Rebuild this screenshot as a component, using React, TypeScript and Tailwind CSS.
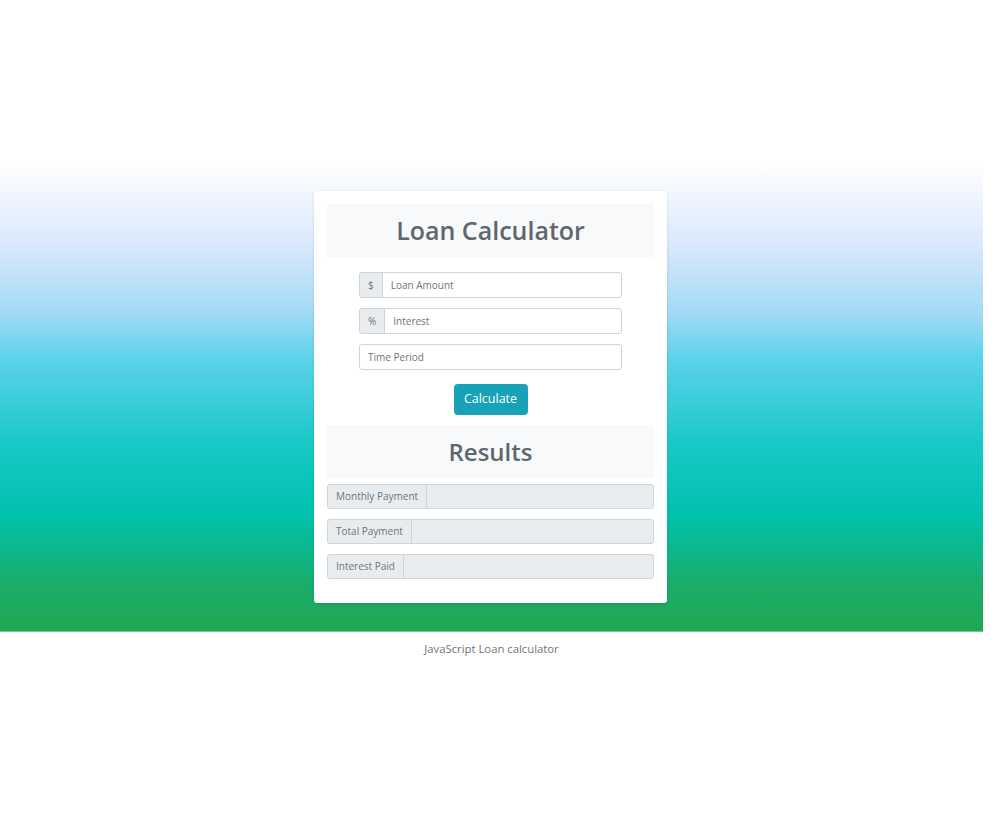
import React from "react";

const font = { fontFamily: '"Open Sans", "Noto Sans", sans-serif' };

function InputRow({ prefix, placeholder }: { prefix?: string; placeholder: string }) {
  return (
    <div className="flex h-[26px] w-[263px]">
      {prefix && (
        <div className="flex items-center justify-center rounded-l-[3px] border border-[#ced4da] bg-[#e9ecef] px-[8px] text-[10px] text-[#6c757d]">
          {prefix}
        </div>
      )}
      <input
        placeholder={placeholder}
        className={`h-full flex-1 border border-[#ced4da] bg-white px-[8px] text-[10px] text-[#495057] outline-none placeholder:text-[#6c757d] ${
          prefix ? "-ml-px rounded-r-[3px]" : "rounded-[3px]"
        }`}
        style={font}
      />
    </div>
  );
}

function ResultRow({ label }: { label: string }) {
  return (
    <div className="flex h-[25px] w-full">
      <div className="flex items-center rounded-l-[3px] border border-[#ced4da] bg-[#e9ecef] px-[8px] text-[10px] text-[#6c757d]">
        {label}
      </div>
      <div className="-ml-px flex-1 rounded-r-[3px] border border-[#ced4da] bg-[#e9ecef]" />
    </div>
  );
}

export default function App() {
  return (
    <div className="min-h-[839px] w-[994px] bg-white" style={font}>
      <div className="h-[163px]" />
      <div
        className="flex w-[983px] justify-center border-b border-[#5fd18c] pb-[28px] pr-[2px] pt-[28px]"
        style={{
          background:
            "linear-gradient(to bottom, #ffffff 0%, #dbe9fd 17%, #a3daf5 32%, #5bd2eb 42%, #19c8c6 60%, #00c2ad 75%, #1aad6a 90%, #22a751 100%)",
        }}
      >
        <div className="w-[353px] rounded-[3px] bg-white px-[13px] pb-[24px] pt-[13px] shadow-[0_1px_3px_rgba(0,0,0,0.12)]">
          <div className="flex h-[53px] items-center justify-center bg-[#f8f9fa]">
            <h1 className="text-[25px] font-semibold leading-none text-[#5f676e]">Loan Calculator</h1>
          </div>
          <div className="mt-[15px] flex flex-col items-center gap-[10px]">
            <InputRow prefix="$" placeholder="Loan Amount" />
            <InputRow prefix="%" placeholder="Interest" />
            <InputRow placeholder="Time Period" />
          </div>
          <div className="mt-[14px] flex justify-center">
            <button className="h-[31px] w-[74px] rounded-[4px] bg-[#17a2b8] text-[12.5px] text-white" style={font}>
              Calculate
            </button>
          </div>
          <div className="mt-[10px] flex h-[53px] items-center justify-center bg-[#f8f9fa]">
            <h2 className="text-[24px] font-semibold leading-none text-[#5f676e]">Results</h2>
          </div>
          <div className="mt-[6px] flex flex-col gap-[10px]">
            <ResultRow label="Monthly Payment" />
            <ResultRow label="Total Payment" />
            <ResultRow label="Interest Paid" />
          </div>
        </div>
      </div>
      <p className="mt-[9px] w-[983px] text-center text-[11.3px] text-[#6c757d]">JavaScript Loan calculator</p>
    </div>
  );
}
